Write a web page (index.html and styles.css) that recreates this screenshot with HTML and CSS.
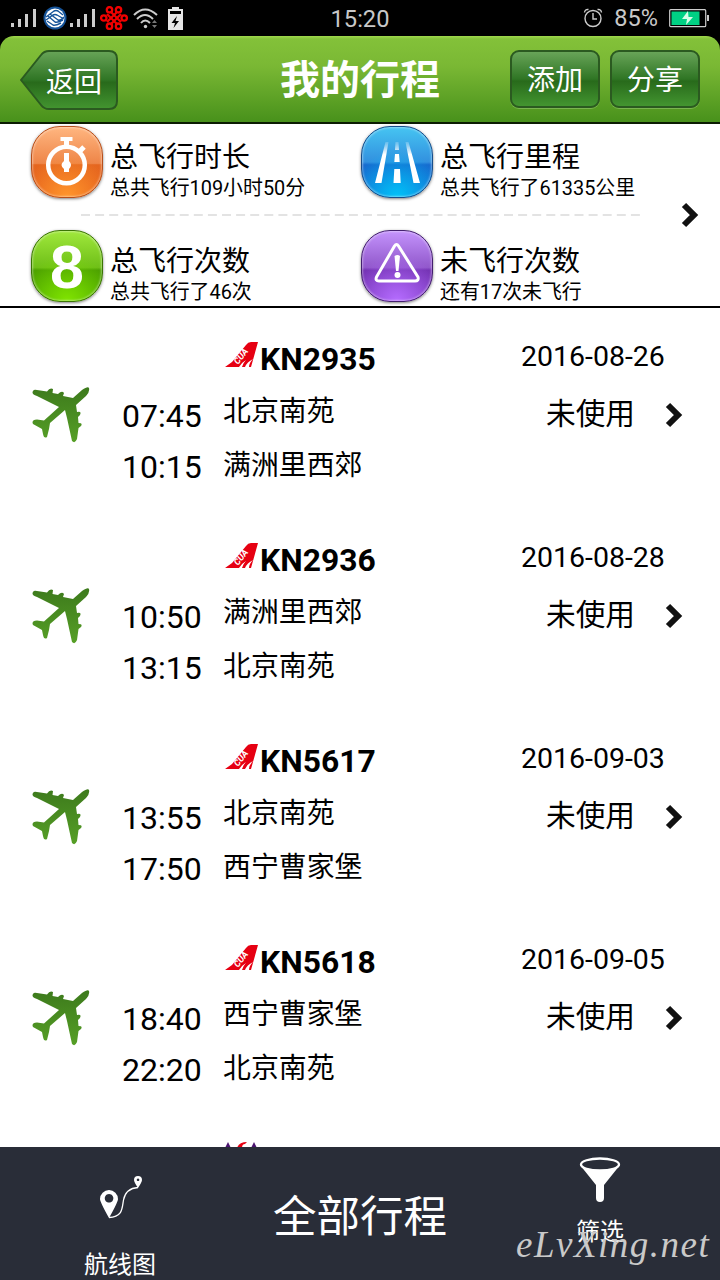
FILE: index.html
```html
<!DOCTYPE html>
<html lang="zh-CN">
<head>
    <meta charset="UTF-8">
    <meta name="viewport" content="width=device-width, initial-scale=1.0">
    <title>我的行程</title>
    <link rel="stylesheet" href="styles.css">
</head>
<body>
    <!-- shared icons -->
    <svg class="defs" width="0" height="0">
        <defs>
            <linearGradient id="planeFill" x1="0" y1="0" x2="0" y2="1">
                <stop offset="0" stop-color="#3d7a1c"/>
                <stop offset="1" stop-color="#569f26"/>
            </linearGradient>
        </defs>
        <symbol id="plane" viewBox="0 0 58 56">
            <path fill="url(#planeFill)" d="M1 4 Q2 2 5 3 L15 4.500 Q18 0 21 2 L20.500 6 L26 7 Q30 3 32 6 L31 9 L41 11 L50 3 Q56 -1 57 1 Q58 5 54 9 L44 18 L45 25 Q50 24 48 28 L46 30 L46.500 36 Q51 36 49 39 L46.500 41 L45 52 Q43 57 40 54 L35 31 L33 23 L18 36 L17 42 L15 50 Q12 52 11 47 L10 42 L1 37 Q-1 33 5 32.500 L12 33.500 L27 20 L5 9 Q-1 7 1 4Z"/>
        </symbol>
        <symbol id="chevron" viewBox="0 0 18 26">
            <path d="M3 3 L13 13 L3 23" fill="none" stroke="#111" stroke-width="6"/>
        </symbol>
        <symbol id="tail" viewBox="0 0 34 26">
            <path fill="#e60012" d="M0 25 L7 20 L21 3 Q23 0 26 0 L33 0 L26 25 H24 Q24 21 28 17 Q22 20 20 25 H17 Q18 21 21 18 Q16 21 14 25Z"/>
        </symbol>
        <symbol id="signal" viewBox="0 0 26 18">
            <path fill="#ccc" d="M0 14h3v4h-3z M7 10h3v8h-3z M14 5h3v13h-3z M22 0h3v18h-3z"/>
        </symbol>
    </svg>

    <div class="status">
        <div class="status-left">
            <svg class="signal" width="26" height="18"><use href="#signal"/></svg>
            <svg class="mobile" width="24" height="24" viewBox="0 0 24 24">
                <circle cx="12" cy="12" r="11.500" fill="#155399"/>
                <circle cx="12" cy="12" r="9.500" fill="#fff"/>
                <path fill="none" stroke="#155399" stroke-width="1.400" d="M3 11 L11 5 Q13 4 15 5 L20 9 M3 14 L10 9 Q12 8 14 9 L21 13 M7 8 L15 14 Q17 15 21 11 M5 10 L12 16 Q14 17 20 14 M4 15 L10 19 Q12 20 18 17"/>
            </svg>
            <svg class="signal" width="26" height="18"><use href="#signal"/></svg>
            <svg class="unicom" width="28" height="24" viewBox="0 0 28 24">
                <g fill="none" stroke="#f20000" stroke-width="2.300">
                    <circle cx="9.500" cy="3.800" r="2.700"/><circle cx="18.500" cy="3.800" r="2.700"/>
                    <circle cx="3.800" cy="12" r="2.700"/><circle cx="24.200" cy="12" r="2.700"/>
                    <circle cx="9.500" cy="20.200" r="2.700"/><circle cx="18.500" cy="20.200" r="2.700"/>
                    <path d="M11 6 L18 13 L21 16 M17 6 L10 13 L7 16 M7 8 L10 11 L17 18 M21 8 L18 11 L11 18"/>
                </g>
            </svg>
            <svg class="wifi" width="26" height="21" viewBox="0 0 26 21">
                <g fill="none" stroke="#ccc" stroke-width="2">
                    <path d="M1 7 Q12 -4 24 7"/><path d="M4 11 Q12 3 20 11"/><path d="M8 15 Q12 10 17 15"/>
                </g>
                <circle cx="12.500" cy="18.500" r="1.700" fill="#ccc"/>
                <path fill="#777" d="M19 15 L21.500 12 L24 15Z M19 17 L21.500 20 L24 17Z"/>
            </svg>
            <svg width="17" height="23" viewBox="0 0 17 23">
                <path fill="#e6e6e6" d="M1 2h4v-2h7v2h4v21h-15z"/>
                <path fill="#000" d="M3 4h11v3h-11z M10 9 L4.500 16 H8 L6.500 21 L12 14 H8.500Z"/>
            </svg>
        </div>
        <div class="clock">15:20</div>
        <div class="status-right">
            <svg width="20" height="20" viewBox="0 0 20 20" fill="none" stroke="#ccc" stroke-width="1.400">
                <circle cx="10" cy="10.500" r="8"/>
                <path d="M10 5v6h4 M1.500 4.500 Q2 1 5.500 1.500 M18.500 4.500 Q18 1 14.500 1.500"/>
            </svg>
            <span>85%</span>
            <svg width="40" height="19" viewBox="0 0 40 19">
                <rect x=".7" y=".7" width="36" height="17" rx="1" fill="none" stroke="#ccc" stroke-width="1.200"/>
                <rect x="2.500" y="2.500" width="28" height="13.500" fill="#00d184"/>
                <path fill="#d8ffe9" d="M19 2 L13 10 H18 L17 16 L24 8 H19.500Z"/>
                <path fill="#ccc" d="M38 6h2v6h-2z"/>
            </svg>
        </div>
    </div>

    <div class="header">
        <div class="back">
            <svg width="98" height="60" viewBox="0 0 98 60">
                <defs>
                    <linearGradient id="btnFill" x1="0" y1="0" x2="0" y2="1">
                        <stop offset="0" stop-color="#68a458"/>
                        <stop offset=".5" stop-color="#2f7524"/>
                        <stop offset=".54" stop-color="#286a1b"/>
                        <stop offset="1" stop-color="#439530"/>
                    </linearGradient>
                </defs>
                <path fill="url(#btnFill)" stroke="#2b5a20" stroke-width="2" d="M1 30 L21 5 Q24 1 29 1 H89 Q97 1 97 9 V51 Q97 59 89 59 H29 Q24 59 21 55Z"/>
            </svg>
            <span>返回</span>
        </div>
        <h1>我的行程</h1>
        <div class="btns">
            <div class="btn">添加</div>
            <div class="btn">分享</div>
        </div>
    </div>

    <div class="summary">
        <div class="stats">
            <div class="stat">
                <div class="tile orange">
                    <svg width="72" height="72" viewBox="0 0 72 72" fill="none" stroke="#fff">
                        <circle cx="35.500" cy="39" r="18.300" stroke-width="4.500"/>
                        <path stroke-width="4" d="M29.500 13h12"/>
                        <path stroke-width="5" d="M35.500 13v8 M47 27l6-6"/>
                        <path fill="#fff" stroke="none" d="M33 27h5v8q4 4 0 8v3h-5v-3q-5-4 0-8z"/>
                    </svg>
                </div>
                <div class="stat-text">
                    <h2>总飞行时长</h2>
                    <p>总共飞行109小时50分</p>
                </div>
            </div>
            <div class="stat">
                <div class="tile blue">
                    <svg width="72" height="72" viewBox="0 0 72 72">
                        <defs>
                            <linearGradient id="road" x1="0" y1="0" x2="0" y2="1">
                                <stop offset="0" stop-color="#fff" stop-opacity=".2"/>
                                <stop offset=".3" stop-color="#fff"/>
                            </linearGradient>
                        </defs>
                        <path fill="url(#road)" d="M24.500 16h3l-7 41h-6.500z M44.500 16h3l11.500 41h-6.500z M34.500 16h3l.5 8h-4z M34 28h4l.7 8h-5.400z M33.300 43h5.700l.7 14h-7.200z"/>
                    </svg>
                </div>
                <div class="stat-text">
                    <h2>总飞行里程</h2>
                    <p>总共飞行了61335公里</p>
                </div>
            </div>
            <svg class="dashes" width="560" height="2"><path d="M1 1H560" stroke="#dadada" stroke-width="1.500" stroke-dasharray="9 5.100"/></svg>
            <div class="stat">
                <div class="tile green"><b>8</b></div>
                <div class="stat-text">
                    <h2>总飞行次数</h2>
                    <p>总共飞行了46次</p>
                </div>
            </div>
            <div class="stat">
                <div class="tile purple">
                    <svg width="72" height="72" viewBox="0 0 72 72">
                        <path fill="none" stroke="#fff" stroke-width="3" stroke-linejoin="round" d="M33.500 16 Q35.500 13 37.500 16 L57 47 Q58 51 54 51 H18 Q14 51 15.500 47Z"/>
                        <path fill="#fff" d="M33.500 26 Q36.500 24 39 26 L37.500 41 H35Z"/>
                        <circle cx="36.500" cy="45" r="3" fill="#fff"/>
                    </svg>
                </div>
                <div class="stat-text">
                    <h2>未飞行次数</h2>
                    <p>还有17次未飞行</p>
                </div>
            </div>
        </div>
        <svg class="more" width="18" height="26"><use href="#chevron"/></svg>
    </div>

    <div class="trips">
        <div class="trip">
            <svg class="plane" width="58" height="56"><use href="#plane"/></svg>
            <div class="times"><span>07:45</span><span>10:15</span></div>
            <div class="route">
                <div class="flight"><svg width="34" height="26"><use href="#tail"/><text x="13" y="23">CUA</text></svg>KN2935</div>
                <div class="city">北京南苑</div>
                <div class="city">满洲里西郊</div>
            </div>
            <div class="state">
                <div class="date">2016-08-26</div>
                <div class="used">未使用</div>
            </div>
            <svg class="arrow" width="18" height="26"><use href="#chevron"/></svg>
        </div>
        <div class="trip">
            <svg class="plane" width="58" height="56"><use href="#plane"/></svg>
            <div class="times"><span>10:50</span><span>13:15</span></div>
            <div class="route">
                <div class="flight"><svg width="34" height="26"><use href="#tail"/><text x="13" y="23">CUA</text></svg>KN2936</div>
                <div class="city">满洲里西郊</div>
                <div class="city">北京南苑</div>
            </div>
            <div class="state">
                <div class="date">2016-08-28</div>
                <div class="used">未使用</div>
            </div>
            <svg class="arrow" width="18" height="26"><use href="#chevron"/></svg>
        </div>
        <div class="trip">
            <svg class="plane" width="58" height="56"><use href="#plane"/></svg>
            <div class="times"><span>13:55</span><span>17:50</span></div>
            <div class="route">
                <div class="flight"><svg width="34" height="26"><use href="#tail"/><text x="13" y="23">CUA</text></svg>KN5617</div>
                <div class="city">北京南苑</div>
                <div class="city">西宁曹家堡</div>
            </div>
            <div class="state">
                <div class="date">2016-09-03</div>
                <div class="used">未使用</div>
            </div>
            <svg class="arrow" width="18" height="26"><use href="#chevron"/></svg>
        </div>
        <div class="trip">
            <svg class="plane" width="58" height="56"><use href="#plane"/></svg>
            <div class="times"><span>18:40</span><span>22:20</span></div>
            <div class="route">
                <div class="flight"><svg width="34" height="26"><use href="#tail"/><text x="13" y="23">CUA</text></svg>KN5618</div>
                <div class="city">西宁曹家堡</div>
                <div class="city">北京南苑</div>
            </div>
            <div class="state">
                <div class="date">2016-09-05</div>
                <div class="used">未使用</div>
            </div>
            <svg class="arrow" width="18" height="26"><use href="#chevron"/></svg>
        </div>
        <!-- next trip, only the top of its airline logo shows -->
        <div class="trip-next">
            <svg width="34" height="20" viewBox="0 0 34 20">
                <path fill="#4b1470" d="M2 6 L5 0 L8 6Z M28 6 L31 0 L34 6Z"/>
                <path fill="#e60012" d="M14 6 Q16 0 24 0 L22 2 Q19 2 19 6Z"/>
            </svg>
        </div>
    </div>

    <div class="footer">
        <div class="tab">
            <svg class="map-icon" width="44" height="44" viewBox="0 0 44 44">
                <path fill="#fff" fill-rule="evenodd" d="M10 43 Q1 27 1 24 A9 9 0 0 1 19 24 Q19 27 10 43Z M10 19 a4.300 4.300 0 1 0 .1 0Z M39 13 Q35 7 35 5 A4 4 0 0 1 43 5 Q43 7 39 13Z M39 3.500 a1.300 1.300 0 1 0 .1 0Z"/>
                <path fill="none" stroke="#fff" stroke-width="1.300" d="M10 42.500 C24 42 23 33 24.500 25 C26 17 31 13 39 12.500"/>
            </svg>
            <span>航线图</span>
        </div>
        <div class="current">全部行程</div>
        <div class="tab filter">
            <svg width="42" height="46" viewBox="0 0 42 46">
                <path fill="#fff" d="M1 8 L17 28 V41 Q17 45 21 45 Q25 45 25 41 V28 L41 8Z"/>
                <ellipse cx="21" cy="7.500" rx="19" ry="6" fill="#292d38" stroke="#fff" stroke-width="2.300"/>
            </svg>
            <span>筛选</span>
            <div class="watermark">eLvXing.net</div>
        </div>
    </div>
</body>
</html>
```
FILE: styles.css
```css
* {
    box-sizing: border-box;
}

body {
    width: 720px;
    height: 1280px;
    margin: 0;
    overflow: hidden;
    display: flex;
    flex-direction: column;
    background-color: #000;
    color: #000;
    font-family: Roboto, "Noto Sans CJK SC", sans-serif;
}

h1, h2, p {
    margin: 0;
    font-weight: normal;
}

svg {
    display: block;
    flex: none;
}

.defs {
    position: absolute;
}

/* status bar */
.status {
    height: 36px;
    flex: none;
    display: grid;
    grid-template-columns: 1fr auto 1fr;
    align-items: center;
    padding: 0 11px;
    color: #c8c8c8;
    font-size: 24px;
}

.status-left, .status-right {
    display: flex;
    align-items: center;
}

.mobile {
    margin: 0 3px 0 6px;
}

.unicom {
    margin: 0 5px 0 4px;
}

.wifi {
    margin-right: 8px;
}

.clock {
    padding-top: 1px;
    font-size: 23.700px;
}

.status-right {
    justify-content: flex-end;
    font-size: 23.500px;
    gap: 11px;
}

/* header */
.header {
    height: 88px;
    flex: none;
    display: grid;
    grid-template-columns: 1fr auto 1fr;
    padding: 14px 20px 0;
    border-radius: 14px 14px 0 0;
    border-bottom: 2px solid #0b1c02;
    background: linear-gradient(#a0d84c, #83c139 3px, #7ab834 35%, #48911b);
    color: #fff;
}

.header h1 {
    font-size: 40px;
    font-weight: bold;
    line-height: 61px;
}

.back {
    position: relative;
    width: 98px;
    height: 60px;
}

.back span {
    position: absolute;
    left: 26px;
    top: 0;
    font-size: 28px;
    line-height: 65px;
}

.btns {
    display: flex;
    justify-content: flex-end;
    gap: 10px;
}

.btn {
    width: 90px;
    height: 58px;
    border: 2px solid #2b5a20;
    border-radius: 9px;
    background: linear-gradient(#68a458, #2f7524 50%, #286a1b 54%, #439530);
    box-shadow: 0 1px 0 #7ab450;
    font-size: 28px;
    line-height: 58px;
    text-align: center;
}

/* totals */
.summary {
    height: 184px;
    flex: none;
    display: flex;
    background-color: #fff;
    border-bottom: 2px solid #000;
}

.stats {
    display: grid;
    grid-template-columns: 330px 300px;
    grid-template-rows: 90px 14px 78px;
    padding-left: 31px;
}

.stat {
    display: flex;
    padding-top: 2px;
    gap: 7px;
}

.dashes {
    grid-column: span 2;
    margin-left: 49px;
}

.stat h2 {
    font-size: 28px;
    line-height: 40px;
    margin-top: 12px;
}

.stat p {
    font-size: 19.900px;
    line-height: 28px;
    margin-top: -3px;
}

.tile {
    width: 72px;
    height: 72px;
    flex: none;
    border-radius: 29px;
    box-shadow: inset 0 0 2px 1px rgba(255, 255, 255, 0.4), 0 1px 3px rgba(0, 0, 0, 0.5);
}

.orange {
    border: 1px solid #b8501c;
    background: radial-gradient(circle at 50% 100%, #ff962c, transparent 55%), linear-gradient(#ffb680, #ee8548 52%, #e5661f 54%, #e8631c);
}

.blue {
    border: 1px solid #174f8c;
    background: radial-gradient(circle at 50% 100%, #00c2f8, transparent 60%), linear-gradient(#46c5f2, #3290df 50%, #1668ce 54%, #1478d8);
}

.green {
    border: 1px solid #3b7505;
    background: radial-gradient(circle at 50% 100%, #80e400, transparent 60%), linear-gradient(#a0e83c, #6fbf18 52%, #4a9e00 56%, #50aa00);
}

.purple {
    border: 1px solid #44206f;
    background: radial-gradient(circle at 50% 100%, #b56cff, transparent 60%), linear-gradient(#c493fc, #9158cb 52%, #7130b0 56%, #7e3cc2);
}

.tile svg {
    margin: -1px;
}

.green b {
    display: block;
    color: #fff;
    font-family: "Liberation Sans", sans-serif;
    font-size: 61px;
    line-height: 72px;
    text-align: center;
}

.more {
    margin: 78px 0 0 20px;
}

/* trip list */
.trips {
    height: 839px;
    flex: none;
    overflow: hidden;
    background-color: #fff;
}

.trip {
    height: 201px;
    display: flex;
    padding-left: 32px;
}

.plane {
    margin-top: 79px;
}

.times {
    display: flex;
    flex-direction: column;
    width: 101px;
    margin-top: 83px;
    padding-left: 32px;
    font-size: 32px;
    line-height: 51px;
}

.times span {
    white-space: nowrap;
}

.route {
    width: 260px;
    margin: 30px 0 0 32px;
    font-size: 27.900px;
}

.flight {
    display: flex;
    height: 47px;
    gap: 1px;
    padding-left: 2px;
    font-size: 31.800px;
    font-weight: bold;
    line-height: 42px;
}

.flight svg {
    margin-top: 4px;
}

.flight text {
    fill: #fff;
    font-size: 9px;
    font-style: italic;
    transform: rotate(-52deg);
    transform-origin: 13px 23px;
}

.city {
    line-height: 54px;
}

.state {
    width: 182px;
    padding: 28px 0 0 38px;
}

.date {
    font-size: 28.500px;
    line-height: 41px;
    white-space: nowrap;
}

.used {
    margin-top: 15px;
    padding-left: 25px;
    font-size: 29.700px;
    line-height: 43px;
}

.arrow {
    margin-top: 94px;
}

.trip-next {
    padding: 30px 0 0 223px;
}

/* bottom bar */
.footer {
    height: 133px;
    flex: none;
    display: grid;
    grid-template-columns: 240px 240px 240px;
    background-color: #292d38;
    color: #fff;
    text-align: center;
}

.tab {
    position: relative;
    display: flex;
    flex-direction: column;
    align-items: center;
    font-size: 24px;
    line-height: 36px;
}

.map-icon {
    margin: 28px 0 28px 2px;
}

.current {
    font-size: 43.500px;
    line-height: 141px;
}

.filter svg {
    margin: 10px 0 11px;
}

.watermark {
    position: absolute;
    left: 36px;
    top: 76px;
    color: #c9c9c9;
    font-family: "Liberation Serif", serif;
    font-style: italic;
    font-size: 37px;
    line-height: 44px;
    letter-spacing: 1.500px;
}
```
